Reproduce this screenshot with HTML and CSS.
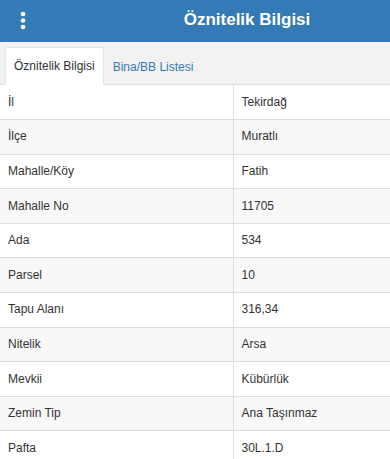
FILE: index.html
```html
<!DOCTYPE html>
<html lang="tr">
<head>
<meta charset="utf-8">
<title>Öznitelik Bilgisi</title>
<link rel="stylesheet" href="styles.css">
</head>
<body>
<header class="topbar">
  <div class="menu">
    <svg width="8" height="20" viewBox="0 0 8 20"><circle cx="4" cy="3" r="2.3" fill="#fff"/><circle cx="4" cy="9.5" r="2.3" fill="#fff"/><circle cx="4" cy="16" r="2.3" fill="#fff"/></svg>
  </div>
  <h1 class="title">Öznitelik Bilgisi</h1>
</header>
<nav class="tabs">
  <a class="tab active">Öznitelik Bilgisi</a>
  <a class="tab">Bina/BB Listesi</a>
</nav>
<table class="attrs">
  <tbody>
    <tr><td class="key">İl</td><td>Tekirdağ</td></tr>
    <tr><td class="key">İlçe</td><td>Muratlı</td></tr>
    <tr><td class="key">Mahalle/Köy</td><td>Fatih</td></tr>
    <tr><td class="key">Mahalle No</td><td>11705</td></tr>
    <tr><td class="key">Ada</td><td>534</td></tr>
    <tr><td class="key">Parsel</td><td>10</td></tr>
    <tr><td class="key">Tapu Alanı</td><td>316,34</td></tr>
    <tr><td class="key">Nitelik</td><td>Arsa</td></tr>
    <tr><td class="key">Mevkii</td><td>Kübürlük</td></tr>
    <tr><td class="key">Zemin Tip</td><td>Ana Taşınmaz</td></tr>
    <tr><td class="key">Pafta</td><td>30L.1.D</td></tr>
  </tbody>
</table>
</body>
</html>
```
FILE: styles.css
```css
* { box-sizing: border-box; }
html, body { margin: 0; padding: 0; background: #fff; }
body {
  font-family: "Liberation Sans", Arial, sans-serif;
  font-size: 12px;
  color: #333;
  overflow: hidden;
}
.topbar {
  height: 42px;
  background: #337ab7;
  display: flex;
  align-items: center;
}
.menu {
  width: 104px;
  padding-left: 19px;
  display: flex;
  align-items: center;
  height: 100%;
}
.menu svg { display: block; margin-top: -1px; }
.title {
  flex: 1;
  margin: 0;
  text-align: center;
  color: #fff;
  font-size: 17px;
  font-weight: bold;
  margin-top: -2px;
}
.tabs {
  height: 43px;
  background: #f2f2f2;
  border-bottom: 1px solid #ddd;
  display: flex;
  align-items: flex-end;
  padding-left: 5px;
}
.tab {
  height: 38px;
  display: flex;
  align-items: center;
  padding: 0 8px;
  color: #337ab7;
  margin-bottom: -1px;
  border: 1px solid transparent;
  border-bottom: none;
}
.tab.active {
  background: #fff;
  color: #333;
  border-color: #e6e6e6;
  border-bottom: 1px solid #fff;
}
.attrs {
  width: 100%;
  border-collapse: collapse;
}
.attrs td {
  padding: 8px 8px;
  height: 34.6px;
  line-height: 17px;
  border-bottom: 1px solid #ddd;
  vertical-align: middle;
}
.attrs td.key {
  width: 233px;
  border-right: 1px solid #ddd;
}
.attrs tr:nth-child(even) td { background: #f8f8f8; }
```
